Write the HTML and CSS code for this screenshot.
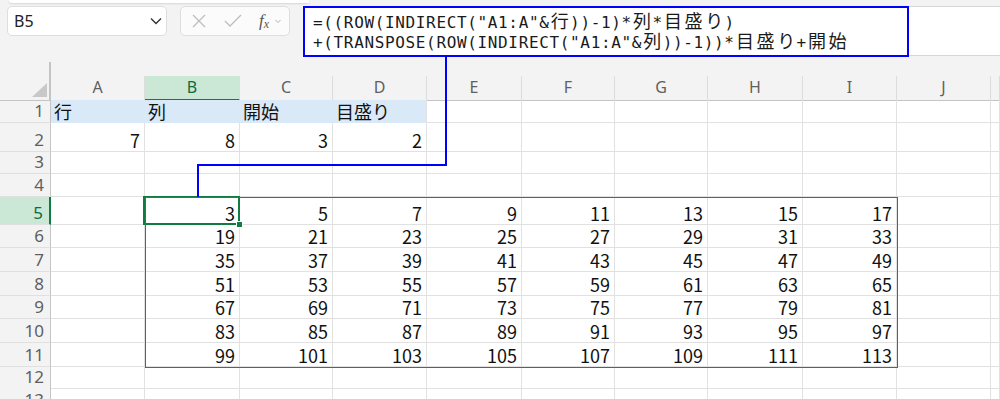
FILE: index.html
```html
<!DOCTYPE html>
<html lang="ja">
    <head>
        <meta charset="UTF-8" />
        <title>Excel - 目盛り</title>
        <link rel="stylesheet" href="styles.css">
    </head>
    <body>
        <div class="app">
            <div class="ribbon-edge"></div>

            <div class="toolbar">
                <div class="namebox">
                    <span>B5</span>
                    <svg width="12" height="8" viewBox="0 0 12 8"><path d="M1 1.5 L6 6.5 L11 1.5" fill="none" stroke="#333" stroke-width="1.4"/></svg>
                </div>
                <div class="fxbox">
                    <svg width="16" height="16" viewBox="0 0 16 16"><path d="M2 2 L14 14 M14 2 L2 14" fill="none" stroke="#bdbdbd" stroke-width="1.3"/></svg>
                    <svg width="18" height="14" viewBox="0 0 18 14"><path d="M1 7 L6 12 L17 1" fill="none" stroke="#bdbdbd" stroke-width="1.3"/></svg>
                    <span class="fx">f<sub>x</sub></span>
                    <svg width="6" height="5" viewBox="0 0 6 5"><path d="M0.5 1 L3 3.5 L5.5 1" fill="none" stroke="#b0b0b0" stroke-width="1"/></svg>
                </div>
                <div class="formula">
                    <div class="fbox">
                        <div>=((ROW(INDIRECT("A1:A"&amp;<span class="w">行</span>))-1)*<span class="w">列</span>*<span class="w">目</span><span class="w">盛</span><span class="w">り</span>)</div>
                        <div>+(TRANSPOSE(ROW(INDIRECT("A1:A"&amp;<span class="w">列</span>))-1))*<span class="w">目</span><span class="w">盛</span><span class="w">り</span>+<span class="w">開</span><span class="w">始</span></div>
                    </div>
                </div>
            </div>

            <div class="sheet">
                <div class="row head">
                    <div class="corner"><span class="tri"></span></div>
                    <div class="col">A</div><div class="col on">B</div><div class="col">C</div><div class="col">D</div><div class="col">E</div>
                    <div class="col">F</div><div class="col">G</div><div class="col">H</div><div class="col">I</div><div class="col">J</div><div class="col"></div>
                </div>
                <div class="row r23">
                    <div class="rh">1</div>
                    <div class="c t blue">行</div><div class="c t blue">列</div><div class="c t blue">開始</div><div class="c t blue last">目盛り</div>
                    <div class="c"></div><div class="c"></div><div class="c"></div><div class="c"></div><div class="c"></div><div class="c"></div><div class="c"></div>
                </div>
                <div class="row r29">
                    <div class="rh">2</div>
                    <div class="c">7</div><div class="c">8</div><div class="c">3</div><div class="c">2</div>
                    <div class="c"></div><div class="c"></div><div class="c"></div><div class="c"></div><div class="c"></div><div class="c"></div><div class="c"></div>
                </div>
                <div class="row r22">
                    <div class="rh">3</div>
                    <div class="c"></div><div class="c"></div><div class="c"></div><div class="c"></div><div class="c"></div><div class="c"></div>
                    <div class="c"></div><div class="c"></div><div class="c"></div><div class="c"></div><div class="c"></div>
                </div>
                <div class="row r23">
                    <div class="rh">4</div>
                    <div class="c"></div><div class="c"></div><div class="c"></div><div class="c"></div><div class="c"></div><div class="c"></div>
                    <div class="c"></div><div class="c"></div><div class="c"></div><div class="c"></div><div class="c"></div>
                </div>
                <div class="row r28">
                    <div class="rh on">5</div>
                    <div class="c"></div><div class="c sel">3</div><div class="c">5</div><div class="c">7</div><div class="c">9</div><div class="c">11</div>
                    <div class="c">13</div><div class="c">15</div><div class="c">17</div><div class="c"></div><div class="c"></div>
                </div>
                <div class="row r23">
                    <div class="rh">6</div>
                    <div class="c"></div><div class="c">19</div><div class="c">21</div><div class="c">23</div><div class="c">25</div><div class="c">27</div>
                    <div class="c">29</div><div class="c">31</div><div class="c">33</div><div class="c"></div><div class="c"></div>
                </div>
                <div class="row r24">
                    <div class="rh">7</div>
                    <div class="c"></div><div class="c">35</div><div class="c">37</div><div class="c">39</div><div class="c">41</div><div class="c">43</div>
                    <div class="c">45</div><div class="c">47</div><div class="c">49</div><div class="c"></div><div class="c"></div>
                </div>
                <div class="row r24">
                    <div class="rh">8</div>
                    <div class="c"></div><div class="c">51</div><div class="c">53</div><div class="c">55</div><div class="c">57</div><div class="c">59</div>
                    <div class="c">61</div><div class="c">63</div><div class="c">65</div><div class="c"></div><div class="c"></div>
                </div>
                <div class="row r23">
                    <div class="rh">9</div>
                    <div class="c"></div><div class="c">67</div><div class="c">69</div><div class="c">71</div><div class="c">73</div><div class="c">75</div>
                    <div class="c">77</div><div class="c">79</div><div class="c">81</div><div class="c"></div><div class="c"></div>
                </div>
                <div class="row r24">
                    <div class="rh">10</div>
                    <div class="c"></div><div class="c">83</div><div class="c">85</div><div class="c">87</div><div class="c">89</div><div class="c">91</div>
                    <div class="c">93</div><div class="c">95</div><div class="c">97</div><div class="c"></div><div class="c"></div>
                </div>
                <div class="row r24">
                    <div class="rh">11</div>
                    <div class="c"></div><div class="c">99</div><div class="c">101</div><div class="c">103</div><div class="c">105</div><div class="c">107</div>
                    <div class="c">109</div><div class="c">111</div><div class="c">113</div><div class="c"></div><div class="c"></div>
                </div>
                <div class="row r21">
                    <div class="rh">12</div>
                    <div class="c"></div><div class="c"></div><div class="c"></div><div class="c"></div><div class="c"></div><div class="c"></div>
                    <div class="c"></div><div class="c"></div><div class="c"></div><div class="c"></div><div class="c"></div>
                </div>
                <div class="row r24">
                    <div class="rh">13</div>
                    <div class="c"></div><div class="c"></div><div class="c"></div><div class="c"></div><div class="c"></div><div class="c"></div>
                    <div class="c"></div><div class="c"></div><div class="c"></div><div class="c"></div><div class="c"></div>
                </div>
            </div>

            <!-- spill range and the hand-drawn arrow from the formula -->
            <div class="spill"></div>
            <div class="link v1"></div>
            <div class="link h"></div>
            <div class="link v2"></div>
        </div>
    </body>
</html>
```

FILE: styles.css
```css
body {
    margin: 0;
    font-family: "Noto Sans", sans-serif;
    background-color: #f3f3f3;
    overflow: hidden;
}

.app {
    position: relative;
    width: 1000px;
    height: 399px;
    overflow: hidden;
}

.ribbon-edge {
    position: absolute;
    top: 0;
    left: 9px;
    width: 300px;
    height: 3px;
    background-color: #fff;
    border-radius: 0 0 0 6px;
    box-shadow: 0 1px 2px rgba(0, 0, 0, 0.12);
}

/* formula bar */
.toolbar {
    display: flex;
    align-items: flex-start;
    padding-top: 6px;
    height: 50px;
}

.namebox {
    box-sizing: border-box;
    width: 160px;
    height: 30px;
    margin-left: 7px;
    background-color: #fff;
    border: 1px solid #dedede;
    border-radius: 5px;
    display: flex;
    align-items: center;
    justify-content: space-between;
    padding: 0 4px 0 6px;
    font-size: 16px;
    color: #222;
}

.fxbox {
    box-sizing: border-box;
    width: 110px;
    height: 30px;
    margin-left: 13px;
    background-color: #fbfbfb;
    border: 1px solid #dedede;
    border-radius: 5px;
    display: flex;
    align-items: center;
    padding-left: 10px;
}

.fxbox svg:nth-child(2) {
    margin-left: 17px;
}

.fx {
    margin-left: 17px;
    font-family: "Liberation Serif", serif;
    font-style: italic;
    font-size: 17px;
    color: #555;
    line-height: 1;
}

.fx sub {
    font-size: 12px;
    vertical-align: -2px;
}

.fxbox svg:last-child {
    margin-left: 6px;
}

.formula {
    flex: 1;
    margin-left: 13px;
    height: 50px;
    box-sizing: border-box;
    background-color: #fff;
    border-top: 1px solid #d6d6d6;
    border-bottom: 1px solid #d6d6d6;
}

.fbox {
    box-sizing: border-box;
    width: 606px;
    height: 51px;
    margin-top: -1px;
    border: 2px solid #0000ff;
    padding: 4px 0 0 8px;
    font-family: "DejaVu Sans Mono", "Noto Sans CJK JP", monospace;
    font-size: 16px;
    letter-spacing: 0.65px;
    line-height: 19px;
    color: #1a1a1a;
    white-space: nowrap;
}

.w {
    display: inline-block;
    width: 20.6px;
    letter-spacing: 0;
    text-align: center;
    font-size: 18px;
    line-height: 19px;
}

/* sheet */
.sheet {
    margin-top: 20px;
    background-color: #fff;
}

.row {
    display: grid;
    grid-template-columns: 51px 94px 95px 93px 94px 95px 93px 93px 95px 94px 94px 1fr;
}

.r21 { height: 21px; }
.r22 { height: 22px; }
.r23 { height: 23px; }
.r24 { height: 24px; }
.r28 { height: 28px; }
.r29 { height: 29px; }

.head {
    height: 24px;
    background-color: #f3f3f3;
}

.corner {
    position: relative;
    border-right: 2px solid #c4c4c4;
    border-bottom: 1px solid #c4c4c4;
    display: flex;
    align-items: flex-end;
    justify-content: flex-end;
    padding: 0 2px 3px 0;
}

.corner::before {
    content: "";
    position: absolute;
    right: -2px;
    top: -14px;
    width: 2px;
    height: 14px;
    background-color: #c4c4c4;
}

.tri {
    width: 0;
    height: 0;
    border-left: 15px solid transparent;
    border-bottom: 14px solid #c8c8c8;
}

.col {
    border-right: 1px solid #dcdcdc;
    border-bottom: 1px solid #c4c4c4;
    text-align: center;
    font-size: 16px;
    line-height: 23px;
    color: #5f5f5f;
}

.col.on {
    background-color: #cbe8d6;
    color: #0f6b3a;
    border-bottom: 2px solid #107c41;
}

.rh {
    background-color: #f3f3f3;
    border-right: 1px solid #c4c4c4;
    border-bottom: 1px solid #e0e0e0;
    text-align: right;
    padding-right: 6px;
    font-size: 17px;
    color: #5f5f5f;
    display: flex;
    align-items: flex-end;
    justify-content: flex-end;
    line-height: 20px;
    padding-bottom: 1px;
}

.rh.on {
    background-color: #cbe8d6;
    color: #0f6b3a;
    border-right: 2px solid #107c41;
}

.c {
    border-right: 1px solid #e1e1e1;
    border-bottom: 1px solid #e1e1e1;
    display: flex;
    align-items: flex-end;
    justify-content: flex-end;
    padding: 0 4px 1px;
    font-family: "Noto Sans CJK JP", "Noto Sans", sans-serif;
    font-size: 18px;
    line-height: 20px;
    color: #111;
    white-space: nowrap;
}

.c.t {
    justify-content: flex-start;
    padding-left: 3px;
}

.c.blue {
    background-color: #dae9f8;
    border-right-color: #dae9f8;
    border-bottom-color: #dae9f8;
}

.c.blue.last {
    border-right-color: #e1e1e1;
}

.c.sel {
    position: relative;
}

.c.sel::before {
    content: "";
    position: absolute;
    left: -2px;
    top: -1px;
    right: -1px;
    bottom: -1px;
    border: 2px solid #107c41;
}

.c.sel::after {
    content: "";
    position: absolute;
    right: -4px;
    bottom: -4px;
    width: 5px;
    height: 5px;
    background-color: #107c41;
    border: 1px solid #fff;
}

/* overlays */
.spill {
    position: absolute;
    left: 145px;
    top: 197px;
    width: 751px;
    height: 169px;
    border: 1px solid #1f68e0;
}

.link {
    position: absolute;
    background-color: #0000ff;
}

.v1 {
    left: 445px;
    top: 57px;
    width: 2px;
    height: 109px;
}

.h {
    left: 197px;
    top: 164px;
    width: 250px;
    height: 2px;
}

.v2 {
    left: 197px;
    top: 164px;
    width: 2px;
    height: 33px;
}
```
